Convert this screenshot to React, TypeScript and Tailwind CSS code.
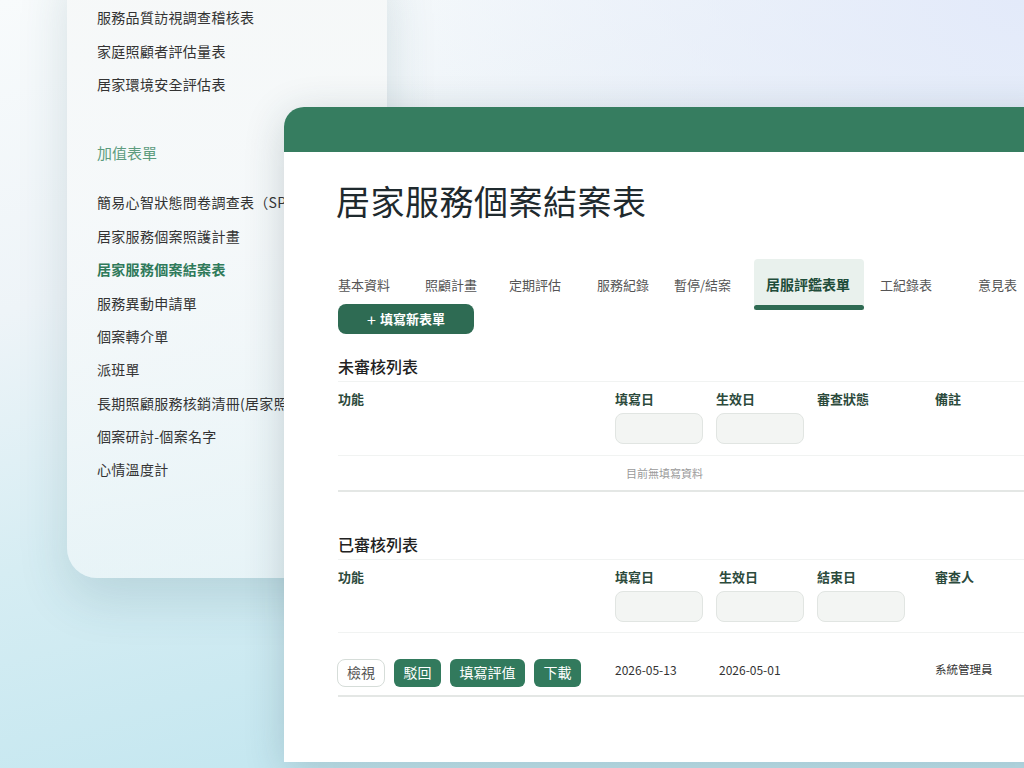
import React from 'react';

const font = { fontFamily: '"Noto Sans CJK TC", "Noto Sans", sans-serif' };

const menuTop = ['服務品質訪視調查稽核表', '家庭照顧者評估量表', '居家環境安全評估表'];
const menuExtra = [
  '簡易心智狀態問卷調查表（SPMSQ）',
  '居家服務個案照護計畫',
  '居家服務個案結案表',
  '服務異動申請單',
  '個案轉介單',
  '派班單',
  '長期照顧服務核銷清冊(居家照顧)',
  '個案研討-個案名字',
  '心情溫度計',
];

const tabs = [
  { label: '基本資料', width: 'w-[87px]' },
  { label: '照顧計畫', width: 'w-[84px]' },
  { label: '定期評估', width: 'w-[88px]' },
  { label: '服務紀錄', width: 'w-[77px]' },
  { label: '暫停/結案', width: 'w-[92px]' },
  { label: '居服評鑑表單', width: 'w-[110px]', active: true },
  { label: '工紀錄表', width: 'w-[98px] ml-1' },
  { label: '意見表', width: 'w-[80px]' },
];

const FilterBox: React.FC = () => (
  <div className="mt-[5px] h-[31px] w-[88px] rounded-lg border border-[#e1e5e2] bg-[#f3f5f3]" />
);

const SideMenu: React.FC = () => (
  <div className="absolute left-[67px] top-[-40px] h-[618px] w-[320px] rounded-bl-[30px] bg-[linear-gradient(180deg,rgba(246,248,248,0.95)_0%,rgba(246,249,250,0.85)_40%,rgba(240,247,249,0.7)_100%)] pt-[41px] shadow-[0_20px_50px_rgba(40,90,100,0.16)]">
    <div className="pl-[30px]">
      {menuTop.map((item) => (
        <div key={item} className="flex h-[33.4px] items-center whitespace-nowrap text-[14px] tracking-[0.3px] text-[#333]">
          {item}
        </div>
      ))}
      <div className="mt-[40px] flex h-[24px] items-center text-[15px] text-[#5c9c7e]">加值表單</div>
      <div className="mt-[21px]">
        {menuExtra.map((item) => (
          <div
            key={item}
            className={
              item === '居家服務個案結案表'
                ? 'flex h-[33.4px] items-center whitespace-nowrap text-[14px] font-bold tracking-[0.3px] text-[#2f7a5a]'
                : 'flex h-[33.4px] items-center whitespace-nowrap text-[14px] tracking-[0.3px] text-[#333]'
            }
          >
            {item}
          </div>
        ))}
      </div>
    </div>
  </div>
);

const MainCard: React.FC = () => (
  <div className="absolute left-[284px] top-[107px] h-[655px] w-[780px] overflow-hidden rounded-tl-[20px] bg-white shadow-[0_8px_40px_rgba(30,60,70,0.2)]">
    <div className="h-[45px] bg-[#367d60]" />
    <div className="pl-[54px] pt-[28px]">
      <h1 className="-ml-[2px] text-[34px] font-normal leading-[41px] tracking-[0.5px] text-[#1f2a2e]">
        居家服務個案結案表
      </h1>

      {/* Tabs */}
      <div className="-ml-3 mt-[38px] flex h-[51px] items-stretch">
        {tabs.map((tab) =>
          tab.active ? (
            <div
              key={tab.label}
              className={`${tab.width} relative flex shrink-0 items-center rounded-t-sm bg-[#e9f1ed] pl-3 text-[14px] font-bold text-[#1f4d3a]`}
            >
              {tab.label}
              <div className="absolute bottom-0 left-0 right-0 h-[5px] rounded-full bg-[#2f6b53]" />
            </div>
          ) : (
            <div key={tab.label} className={`${tab.width} flex shrink-0 items-center pl-3 text-[13px] text-[#555]`}>
              {tab.label}
            </div>
          )
        )}
      </div>

      <button className="-mt-[6px] flex h-[30px] w-[136px] items-center justify-center gap-1 rounded-lg bg-[#2e6b53] text-[13px] font-bold text-white">
        <span className="text-[16px] font-normal leading-none">+</span>
        填寫新表單
      </button>

      {/* Pending list */}
      <div className="mt-[20px] h-[27px] text-[16px] font-medium leading-[24px] text-[#222]">未審核列表</div>
      <div className="border-t border-[#f1f3f2]">
        <div className="grid grid-cols-[277px_101px_101px_118px_1fr] pb-[11px] pt-[8px] text-[13px] font-semibold leading-[18px] text-[#2c4a3c]">
          <div>功能</div>
          <div>
            填寫日
            <FilterBox />
          </div>
          <div>
            生效日
            <FilterBox />
          </div>
          <div>審查狀態</div>
          <div>備註</div>
        </div>
        <div className="flex h-[37px] items-center border-t border-b-2 border-t-[#f1f3f2] border-b-[#e4e7e5]">
          <div className="w-[650px] pl-[3px] text-center text-[11px] text-[#9a9a9a]">目前無填寫資料</div>
        </div>
      </div>

      {/* Reviewed list */}
      <div className="mt-[40px] h-[27px] text-[16px] font-medium leading-[24px] text-[#222]">已審核列表</div>
      <div className="border-t border-[#f1f3f2]">
        <div className="grid grid-cols-[277px_104px_98px_118px_1fr] pb-[10px] pt-[8px] text-[13px] font-semibold leading-[18px] text-[#2c4a3c]">
          <div>功能</div>
          <div>
            填寫日
            <FilterBox />
          </div>
          <div>
            生效日
            <div className="-ml-[3px]">
              <FilterBox />
            </div>
          </div>
          <div>
            結束日
            <FilterBox />
          </div>
          <div>審查人</div>
        </div>
        <div className="grid h-[65px] grid-cols-[277px_104px_98px_118px_1fr] items-center border-t border-b-2 border-t-[#f1f3f2] border-b-[#e4e7e5] pt-[17px] text-[12px] text-[#333]">
          <div className="-ml-px flex items-center gap-[9px] text-[14px]">
            <button className="h-[28px] w-[48px] rounded-lg border-[1.5px] border-[#d6ddd9] bg-white text-[#555]">檢視</button>
            <button className="h-[28px] w-[47px] rounded-md bg-[#327a5d] text-white">駁回</button>
            <button className="h-[28px] w-[75px] rounded-md bg-[#327a5d] text-white">填寫評值</button>
            <button className="h-[28px] w-[47px] rounded-md bg-[#327a5d] text-white">下載</button>
          </div>
          <div className="-mt-[6px]">2026-05-13</div>
          <div className="-mt-[6px]">2026-05-01</div>
          <div />
          <div className="-mt-[6px] text-[11.5px]">系統管理員</div>
        </div>
      </div>
    </div>
  </div>
);

const App: React.FC = () => {
  return (
    <div
      style={font}
      className="relative h-[768px] w-[1024px] overflow-hidden bg-[linear-gradient(165deg,#f8fbfc_0%,#eef4f8_30%,#d6edf3_55%,#c5e7f0_80%,#c0e4ee_100%)]"
    >
      <div className="absolute right-0 top-0 h-[420px] w-[650px] bg-[radial-gradient(ellipse_at_top_right,#e3eafa_0%,rgba(227,234,250,0)_70%)]" />
      <SideMenu />
      <MainCard />
    </div>
  );
};

export default App;
